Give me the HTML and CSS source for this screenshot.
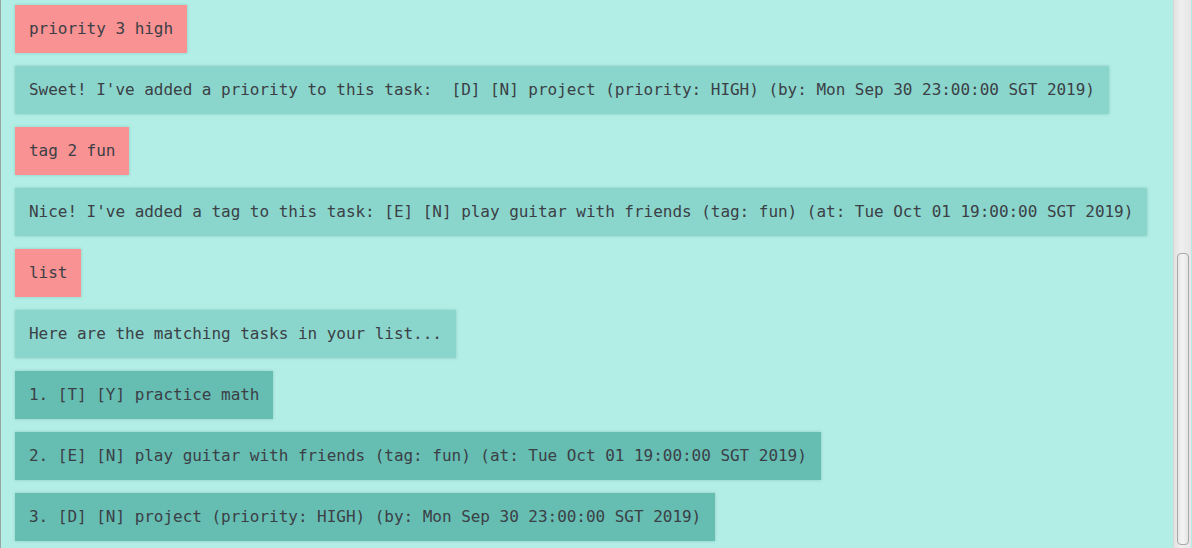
FILE: index.html
```html
<!DOCTYPE html>
<html>
<head>
<meta charset="utf-8">
<link rel="stylesheet" href="styles.css">
</head>
<body>
<div class="window">
  <div class="chat">
    <div class="bubble user">priority 3 high</div>
    <div class="bubble bot">Sweet! I've added a priority to this task:&nbsp; [D] [N] project (priority: HIGH) (by: Mon Sep 30 23:00:00 SGT 2019)</div>
    <div class="bubble user">tag 2 fun</div>
    <div class="bubble bot">Nice! I've added a tag to this task: [E] [N] play guitar with friends (tag: fun) (at: Tue Oct 01 19:00:00 SGT 2019)</div>
    <div class="bubble user">list</div>
    <div class="bubble bot">Here are the matching tasks in your list...</div>
    <div class="bubble item">1. [T] [Y] practice math</div>
    <div class="bubble item">2. [E] [N] play guitar with friends (tag: fun) (at: Tue Oct 01 19:00:00 SGT 2019)</div>
    <div class="bubble item">3. [D] [N] project (priority: HIGH) (by: Mon Sep 30 23:00:00 SGT 2019)</div>
  </div>
  <div class="scrollbar">
    <div class="thumb"></div>
  </div>
</div>
</body>
</html>
```
FILE: styles.css
```css
html, body {
  margin: 0;
  padding: 0;
  height: 100%;
  overflow: hidden;
}
body {
  background: #b2eee6;
  font-family: "DejaVu Sans Mono", "Liberation Mono", monospace;
  font-size: 16px;
  color: #3b4046;
}
.window {
  display: flex;
  height: 548px;
  border-left: 1px solid #9aa5a3;
  box-sizing: border-box;
}
.chat {
  flex: 1;
  display: flex;
  flex-direction: column;
  align-items: flex-start;
  gap: 13px;
  padding: 5px 0 0 14px;
}
.bubble {
  padding: 14px 14px;
  line-height: 20px;
  white-space: pre;
  box-shadow: 0 0 3px rgba(40, 90, 85, 0.25);
  letter-spacing: -0.03px;
}
.user {
  background: #f99292;
}
.bot {
  background: #8ad6cc;
}
.item {
  background: #66bdb2;
}
.scrollbar {
  width: 18px;
  margin-right: 1px;
  background: linear-gradient(to right, #e2e2e2, #efefef 40%, #e6e6e6);
  border-left: 1px solid #d6d6d6;
  display: flex;
  flex-direction: column;
  align-items: center;
  box-sizing: border-box;
}
.thumb {
  margin-top: 253px;
  width: 12px;
  height: 292px;
  border: 1px solid #a8a8a8;
  border-radius: 4px;
  background: linear-gradient(to right, #e8e8e8, #f4f4f4 50%, #e4e4e4);
  box-sizing: border-box;
}
```
